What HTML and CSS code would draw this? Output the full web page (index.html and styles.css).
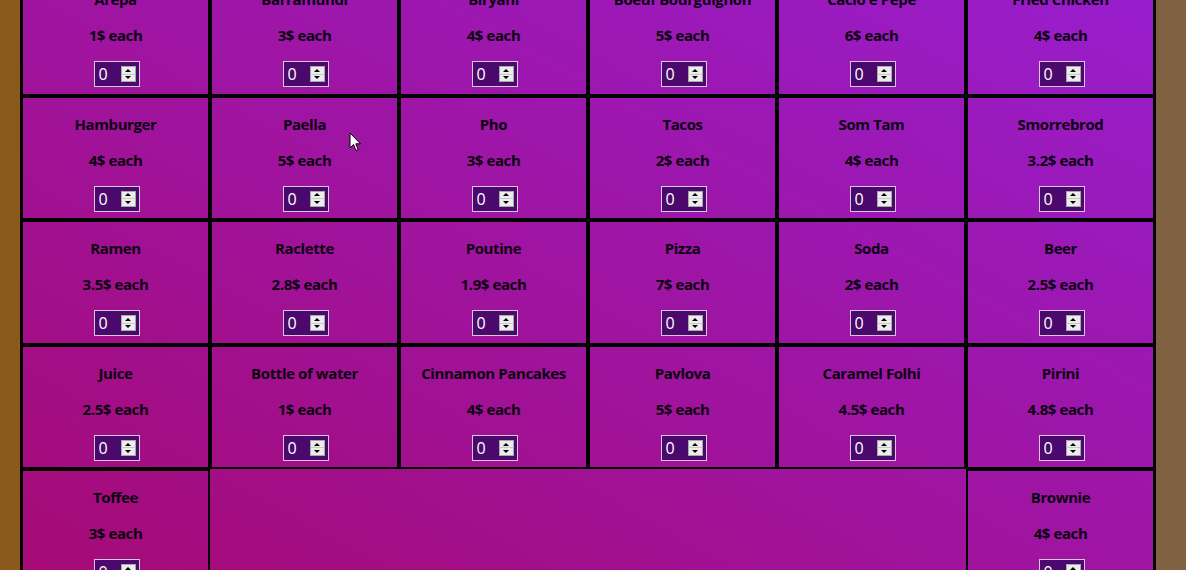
FILE: index.html
```html
<!DOCTYPE html>
<html lang="en">
<head>
<meta charset="utf-8">
<title>Menu</title>
<link rel="stylesheet" href="styles.css">
</head>
<body>
<main class="menu">
  <div class="item"><p class="name">Arepa</p><p class="price">1$ each</p><div class="qty"><input type="number" value="0" min="0"><div class="spin"><span class="up"></span><span class="down"></span></div></div></div>
  <div class="item"><p class="name">Barramundi</p><p class="price">3$ each</p><div class="qty"><input type="number" value="0" min="0"><div class="spin"><span class="up"></span><span class="down"></span></div></div></div>
  <div class="item"><p class="name">Biryani</p><p class="price">4$ each</p><div class="qty"><input type="number" value="0" min="0"><div class="spin"><span class="up"></span><span class="down"></span></div></div></div>
  <div class="item"><p class="name">Boeuf Bourguignon</p><p class="price">5$ each</p><div class="qty"><input type="number" value="0" min="0"><div class="spin"><span class="up"></span><span class="down"></span></div></div></div>
  <div class="item"><p class="name">Cacio e Pepe</p><p class="price">6$ each</p><div class="qty"><input type="number" value="0" min="0"><div class="spin"><span class="up"></span><span class="down"></span></div></div></div>
  <div class="item"><p class="name">Fried Chicken</p><p class="price">4$ each</p><div class="qty"><input type="number" value="0" min="0"><div class="spin"><span class="up"></span><span class="down"></span></div></div></div>

  <div class="item"><p class="name">Hamburger</p><p class="price">4$ each</p><div class="qty"><input type="number" value="0" min="0"><div class="spin"><span class="up"></span><span class="down"></span></div></div></div>
  <div class="item"><p class="name">Paella</p><p class="price">5$ each</p><div class="qty"><input type="number" value="0" min="0"><div class="spin"><span class="up"></span><span class="down"></span></div></div></div>
  <div class="item"><p class="name">Pho</p><p class="price">3$ each</p><div class="qty"><input type="number" value="0" min="0"><div class="spin"><span class="up"></span><span class="down"></span></div></div></div>
  <div class="item"><p class="name">Tacos</p><p class="price">2$ each</p><div class="qty"><input type="number" value="0" min="0"><div class="spin"><span class="up"></span><span class="down"></span></div></div></div>
  <div class="item"><p class="name">Som Tam</p><p class="price">4$ each</p><div class="qty"><input type="number" value="0" min="0"><div class="spin"><span class="up"></span><span class="down"></span></div></div></div>
  <div class="item"><p class="name">Smorrebrod</p><p class="price">3.2$ each</p><div class="qty"><input type="number" value="0" min="0"><div class="spin"><span class="up"></span><span class="down"></span></div></div></div>

  <div class="item"><p class="name">Ramen</p><p class="price">3.5$ each</p><div class="qty"><input type="number" value="0" min="0"><div class="spin"><span class="up"></span><span class="down"></span></div></div></div>
  <div class="item"><p class="name">Raclette</p><p class="price">2.8$ each</p><div class="qty"><input type="number" value="0" min="0"><div class="spin"><span class="up"></span><span class="down"></span></div></div></div>
  <div class="item"><p class="name">Poutine</p><p class="price">1.9$ each</p><div class="qty"><input type="number" value="0" min="0"><div class="spin"><span class="up"></span><span class="down"></span></div></div></div>
  <div class="item"><p class="name">Pizza</p><p class="price">7$ each</p><div class="qty"><input type="number" value="0" min="0"><div class="spin"><span class="up"></span><span class="down"></span></div></div></div>
  <div class="item"><p class="name">Soda</p><p class="price">2$ each</p><div class="qty"><input type="number" value="0" min="0"><div class="spin"><span class="up"></span><span class="down"></span></div></div></div>
  <div class="item"><p class="name">Beer</p><p class="price">2.5$ each</p><div class="qty"><input type="number" value="0" min="0"><div class="spin"><span class="up"></span><span class="down"></span></div></div></div>

  <div class="item"><p class="name">Juice</p><p class="price">2.5$ each</p><div class="qty"><input type="number" value="0" min="0"><div class="spin"><span class="up"></span><span class="down"></span></div></div></div>
  <div class="item"><p class="name">Bottle of water</p><p class="price">1$ each</p><div class="qty"><input type="number" value="0" min="0"><div class="spin"><span class="up"></span><span class="down"></span></div></div></div>
  <div class="item"><p class="name">Cinnamon Pancakes</p><p class="price">4$ each</p><div class="qty"><input type="number" value="0" min="0"><div class="spin"><span class="up"></span><span class="down"></span></div></div></div>
  <div class="item"><p class="name">Pavlova</p><p class="price">5$ each</p><div class="qty"><input type="number" value="0" min="0"><div class="spin"><span class="up"></span><span class="down"></span></div></div></div>
  <div class="item"><p class="name">Caramel Folhi</p><p class="price">4.5$ each</p><div class="qty"><input type="number" value="0" min="0"><div class="spin"><span class="up"></span><span class="down"></span></div></div></div>
  <div class="item"><p class="name">Pirini</p><p class="price">4.8$ each</p><div class="qty"><input type="number" value="0" min="0"><div class="spin"><span class="up"></span><span class="down"></span></div></div></div>

  <div class="item"><p class="name">Toffee</p><p class="price">3$ each</p><div class="qty"><input type="number" value="0" min="0"><div class="spin"><span class="up"></span><span class="down"></span></div></div></div>
  <div class="item"><p class="name">Brownie</p><p class="price">4$ each</p><div class="qty"><input type="number" value="0" min="0"><div class="spin"><span class="up"></span><span class="down"></span></div></div></div>
</main>
<svg class="cursor" width="13" height="20" viewBox="0 0 13 20" aria-hidden="true">
  <path d="M1 1 L1 16 L4.5 12.5 L7 18.5 L9.2 17.6 L6.8 11.8 L11.5 11.8 Z" fill="#fff" stroke="#000" stroke-width="1" stroke-linejoin="round"/>
</svg>
</body>
</html>
```
FILE: styles.css
```css
html, body {
  margin: 0;
  padding: 0;
}

body {
  min-height: 100vh;
  overflow: hidden;
  background: linear-gradient(to right, #8b591b, #806243);
  font-family: "Open Sans", "Noto Sans", sans-serif;
}

.menu {
  margin: -30px 30px 0 20px;
  border: 1px solid #000;
  display: flex;
  flex-wrap: wrap;
  justify-content: space-between;
  background: linear-gradient(to top right, #a60a74, #981ecf);
}

.item {
  box-sizing: border-box;
  width: calc(100% / 6);
  border: 2px solid #000;
  text-align: center;
  padding: 0 6px 6.6px;
  color: #0c0010;
}

.name,
.price {
  margin: 16px 0;
  font-size: 15px;
  line-height: 20px;
  font-weight: 700;
  letter-spacing: -0.4px;
}

.qty {
  box-sizing: border-box;
  display: inline-flex;
  align-items: center;
  width: 46px;
  height: 26px;
  border: 1px solid #d6c6e0;
  background: #4b096d;
  padding: 0 3px 0 4px;
  margin-left: 2px;
  vertical-align: top;
}

.qty input {
  width: 20px;
  padding: 0;
  margin: 0;
  border: 0;
  background: transparent;
  color: #fff;
  font-family: "Open Sans", "Noto Sans", sans-serif;
  font-size: 16px;
  line-height: 20px;
  appearance: textfield;
  -moz-appearance: textfield;
  outline: none;
}

.qty input::-webkit-inner-spin-button,
.qty input::-webkit-outer-spin-button {
  -webkit-appearance: none;
  margin: 0;
}

.spin {
  margin-left: auto;
  display: flex;
  flex-direction: column;
  width: 15px;
  height: 16px;
}

.spin span {
  flex: 1;
  box-sizing: border-box;
  background: #ececec;
  border: 1px solid #a8a8a8;
  display: flex;
  align-items: center;
  justify-content: center;
}

.spin .up {
  border-bottom-color: #c8c8c8;
}

.spin .down {
  border-top: 0;
}

.spin span::before {
  content: "";
  width: 0;
  height: 0;
  border-left: 3px solid transparent;
  border-right: 3px solid transparent;
}

.spin .up::before {
  border-bottom: 3px solid #000;
}

.spin .down::before {
  border-top: 3px solid #000;
}

.cursor {
  position: absolute;
  left: 349px;
  top: 132px;
}
```
